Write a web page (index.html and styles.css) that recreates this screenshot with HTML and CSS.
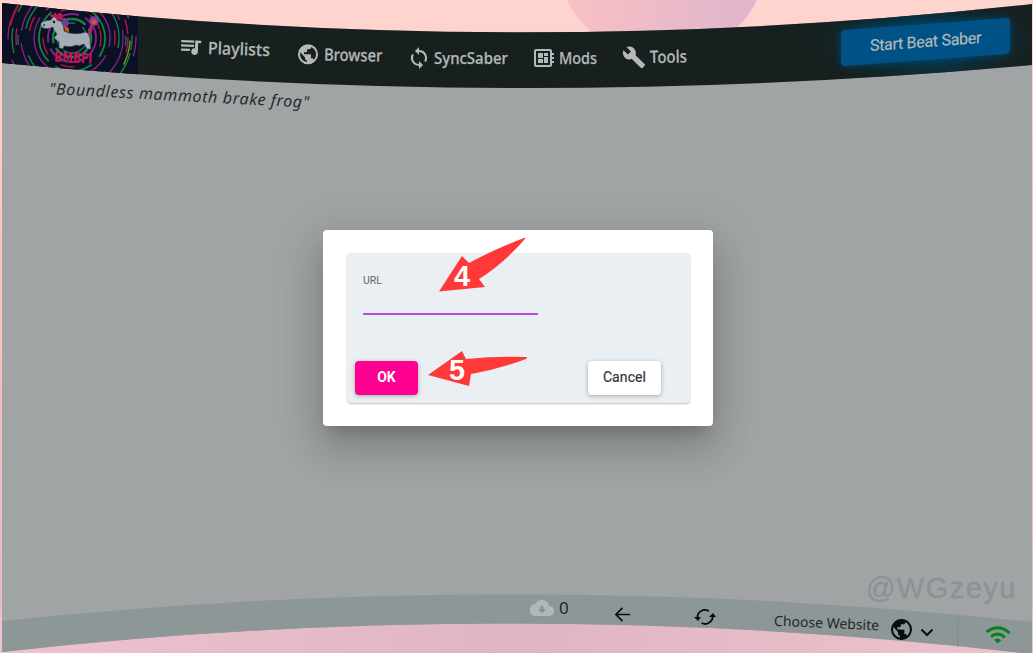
FILE: index.html
```html
<!DOCTYPE html>
<html lang="en">
<head>
<meta charset="utf-8">
<title>BMBF</title>
<link rel="stylesheet" href="styles.css">
</head>
<body>
<div class="scene">
  <svg class="backdrop" viewBox="0 0 1033 653" aria-hidden="true">
    <defs>
      <linearGradient id="sky" x1="0" y1="0" x2="0" y2="1"><stop offset="0" stop-color="#ffd5d0"/><stop offset=".4" stop-color="#f8c4bd"/><stop offset="1" stop-color="#e2b9c5"/></linearGradient>
      <linearGradient id="planet"><stop offset="0" stop-color="#f9c1c2"/><stop offset="1" stop-color="#dfb4ce"/></linearGradient>
      <radialGradient id="glow"><stop offset=".35" stop-color="#003c56"/><stop offset="1" stop-color="#17201f" stop-opacity="0"/></radialGradient>
      <linearGradient id="floor" x1="0" x2="1"><stop offset="0" stop-color="#edc2ce"/><stop offset=".5" stop-color="#deb6c1"/><stop offset="1" stop-color="#edc2cd"/></linearGradient>
      <clipPath id="bar"><path d="M2 3Q517 61 1032 4V65Q517 112 2 63Z"/></clipPath>
    </defs>
    <rect width="1033" height="653" fill="url(#sky)"/>
    <circle cx="662" cy="-47" r="106" fill="url(#planet)"/>
    <rect y="610" width="1033" height="43" fill="url(#floor)"/>
    <path d="M2 3Q517 61 1032 4V654Q517 594 2 652Z" fill="#a1a4a5"/>
    <path d="M2 621Q517 567 1032 622V654Q517 594 2 652Z" fill="#8e9798"/>
    <path d="M2 3Q517 61 1032 4V65Q517 112 2 63Z" fill="#17201f"/>
    <g clip-path="url(#bar)">
      <ellipse cx="926" cy="42" rx="125" ry="50" fill="url(#glow)"/>
      <path d="M2 0H138V80H2Z" fill="#0b1024"/>
      <g fill="none" stroke-width="1.400" stroke-linecap="round">
        <g stroke="#138344"><circle cx="72" cy="38" r="19" stroke-width="2.400" stroke-dasharray="48 7"/><circle cx="72" cy="38" r="33" stroke-width="1.800" stroke-dasharray="54 12 37 10" transform="rotate(-60 72 38)"/><circle cx="72" cy="38" r="47" stroke-dasharray="42 28 29 21" transform="rotate(-40 72 38)"/><circle cx="72" cy="38" r="60" stroke-dasharray="24 18 14 23" transform="rotate(15 72 38)"/></g>
        <g stroke="#7b267e"><circle cx="72" cy="38" r="24" stroke-width="2" stroke-dasharray="47 8" transform="rotate(40 72 38)"/><circle cx="72" cy="38" r="38" stroke-dasharray="48 10 32 16" transform="rotate(140 72 38)"/><circle cx="72" cy="38" r="51" stroke-dasharray="32 12 44 13" transform="rotate(75 72 38)"/><circle cx="72" cy="38" r="64" stroke-dasharray="18 22"/></g>
        <g stroke="#ae1744"><circle cx="72" cy="38" r="29" stroke-dasharray="16 35 13 18" transform="rotate(-15 72 38)"/><circle cx="72" cy="38" r="43" stroke-dasharray="14 46" transform="rotate(110 72 38)"/><circle cx="72" cy="38" r="63" stroke-width="2" stroke-dasharray="24 374" transform="rotate(192 72 38)"/><circle cx="72" cy="38" r="56" stroke-dasharray="14 44 16 37"/></g>
        <g stroke="#176c72"><circle cx="72" cy="38" r="15" stroke-dasharray="32 9"/><circle cx="72" cy="38" r="54" stroke-dasharray="9 49" transform="rotate(50 72 38)"/></g>
        <circle cx="72" cy="38" r="58" stroke="#888b20" stroke-dasharray="22 340" transform="rotate(5 72 38)"/>
      </g>
      <path d="M85 36Q92 34 91 25" fill="none" stroke="#bf1d72" stroke-width="3"/>
      <circle cx="94" cy="21" r="4.800" fill="#8537a1"/><circle cx="94" cy="22" r="2.600" fill="#c05a38"/>
      <path d="M42 22Q47 20 51 20L55 13 57 20Q64 21 64 31Q74 36 86 32Q91 35 90 43L91 49 87 49 84 44Q81 45 79 46L77 45Q70 48 64 46L63 49 59 48 59 42 54 38 57 34Q53 30 53 27Q48 30 43 28Q39 25 42 22Z" fill="#a2adb5" stroke="#343b4c" stroke-width=".6"/>
      <circle cx="54" cy="22" r="1.200" fill="#111624"/><circle cx="44" cy="25" r="1" fill="#343b4c"/>
      <path d="M51 17Q48 13 54 15L55 12 57 15Q59 11 62 14Q64 19 60 21Q56 17 51 17Z" fill="#bd174d"/>
      <path d="M62 18Q68 17 69 23Q67 29 63 25Z" fill="#7837a0"/><path d="M64 26Q70 26 69 32L65 31Z" fill="#c05d26"/>
      <text x="54" y="61.500" class="logo-text" textLength="38" lengthAdjust="spacingAndGlyphs" transform="rotate(3 54 62)">BMBFI</text>
    </g>
    <path d="M958 619V647" stroke="#818b8c"/>
    <path d="M656 599V625M772 605V630" stroke="#899293"/>
  </svg>

  <header class="topbar">
    <nav class="nav">
      <a class="item playlists"><svg viewBox="0 0 24 24"><path d="M2 5h13v2.200H2zm0 4.200h13v2.200H2zm0 4.200h9v2.200H2zM16 5h6v2.500h-3V16a3.300 3.300 0 1 1-3-3.200z"/></svg><span>Playlists</span></a>
      <a class="item browser"><svg viewBox="0 0 24 24"><path d="M12 2a10 10 0 1 0 0 20 10 10 0 0 0 0-20zm-1 17.900A8 8 0 0 1 4.200 10.200L9 15v1a2 2 0 0 0 2 2zm6.900-2.500A2 2 0 0 0 16 16h-1v-3a1 1 0 0 0-1-1H8v-2h2a1 1 0 0 0 1-1V7h2a2 2 0 0 0 2-2v-.4a8 8 0 0 1 2.900 12.800z"/></svg><span>Browser</span></a>
      <a class="item sync"><svg viewBox="0 0 24 24"><path d="M12 4V1L8 5l4 4V6a6 6 0 0 1 5.300 8.800l1.500 1.500A8 8 0 0 0 12 4zm0 14a6 6 0 0 1-5.300-8.800L5.200 7.700A8 8 0 0 0 12 20v3l4-4-4-4z"/></svg><span>SyncSaber</span></a>
      <a class="item mods"><svg viewBox="0 0 24 24"><path d="M22 9V7h-2V5a2 2 0 0 0-2-2H4a2 2 0 0 0-2 2v14c0 1.100.9 2 2 2h14a2 2 0 0 0 2-2v-2h2v-2h-2v-2h2v-2h-2V9zm-4 10H4V5h14zM6 13h5v4H6zm6-6h4v3h-4zM6 7h5v5H6zm6 4h4v6h-4z"/></svg><span>Mods</span></a>
      <a class="item tools"><svg viewBox="0 0 24 24"><path d="M22.700 19l-9.100-9.100c.9-2.300.4-5-1.500-6.900-2-2-5-2.400-7.400-1.300L9 6 6 9 1.600 4.700C.4 7.100.9 10.100 2.900 12.100c1.900 1.900 4.600 2.400 6.900 1.500l9.100 9.100c.4.4 1 .4 1.400 0l2.300-2.300c.5-.4.5-1.100.1-1.400z"/></svg><span>Tools</span></a>
    </nav>
    <button class="start">Start Beat Saber</button>
  </header>

  <main class="content">
    <p class="quote">"Boundless mammoth brake frog"</p>
    <section class="dialog">
      <div class="card">
        <label class="field"><span>URL</span><input class="url" type="text" aria-label="URL"></label>
        <div class="actions"><button class="ok">OK</button><button class="cancel">Cancel</button></div>
      </div>
      <svg class="markers" viewBox="0 0 390 197">
        <path d="M116 61.500L139 26 146 33Q172 19 201 8Q203 7 202 9Q180 34 156 49L162 57Z"/>
        <path d="M105 145L139 121 143 129Q174 126 202 127Q206 127 203 129Q176 139 148 144L146 156Z"/>
        <text x="131" y="55.500" textLength="16" lengthAdjust="spacingAndGlyphs">4</text><text x="126" y="150" textLength="16" lengthAdjust="spacingAndGlyphs">5</text>
      </svg>
    </section>
    <p class="watermark">@WGzeyu</p>
  </main>

  <footer class="bottombar">
    <div class="downloads"><svg viewBox="0 0 24 18"><path d="M19.300 7A7.500 7.500 0 0 0 5.300 5 6 6 0 0 0 6 17h13a5 5 0 0 0 .3-10z" fill="#b2b7b7"/><path d="M10.500 7h3v3H16l-4 4.500L8 10h2.500z" fill="#899191"/></svg><span>0</span></div>
    <svg class="back" viewBox="0 0 18 18"><path d="M17 9H2M9 2L2 9l7 7" fill="none" stroke="#080d0e" stroke-width="1.800"/></svg>
    <svg class="reload" viewBox="0 0 22 18"><path d="M3.500 10Q3 5 8 2.500 11 1 15 3M18.500 7q1 5-4 8-3 2-7 0" fill="none" stroke="#080d0e" stroke-width="1.800"/><path d="M0 9h7l-3 4zM15 9l4-4 3 4z" fill="#080d0e"/></svg>
    <span class="choose">Choose Website</span>
    <svg class="globe" viewBox="2 2 20 20"><path d="M12 2a10 10 0 1 0 0 20 10 10 0 0 0 0-20zm-1 17.900A8 8 0 0 1 4.200 10.200L9 15v1a2 2 0 0 0 2 2zm6.900-2.500A2 2 0 0 0 16 16h-1v-3a1 1 0 0 0-1-1H8v-2h2a1 1 0 0 0 1-1V7h2a2 2 0 0 0 2-2v-.4a8 8 0 0 1 2.900 12.800z"/></svg>
    <svg class="chevron" viewBox="0 0 14 9"><path d="M1.500 1.500L7 7l5.500-5.500" fill="none" stroke="#080d0e" stroke-width="2"/></svg>
    <svg class="wifi" viewBox="0 0 26 18"><g fill="none" stroke="#087f19" stroke-width="2.800"><path d="M1.500 6.500Q13-3 24.500 6.500M6 11Q13 5 20 11"/></g><path d="M9.500 14Q13 11 16.500 14L13 17.500z" fill="#087f19"/></svg>
  </footer>
</div>
</body>
</html>
```
FILE: styles.css
```css
* { box-sizing: border-box; }
body { margin: 0; overflow: hidden; font-family: "Noto Sans", sans-serif; }
p { margin: 0; }
button { border: 0; padding: 0; }
.scene { position: relative; width: 1033px; height: 653px; display: flex; flex-direction: column; }
.backdrop { position: absolute; inset: 0; width: 1033px; height: 653px; }
.logo-text { font: bold 14px "DejaVu Sans", sans-serif; fill: #c51355; }
.topbar, .content, .bottombar { position: relative; }
.topbar { height: 88px; display: flex; justify-content: space-between; align-items: flex-start; padding: 0 23px 0 179px; }
.nav { display: grid; grid-template-columns: 117px 111px 125px 90px 70px; align-items: start; color: #b3b8b8; font-size: 17px; font-weight: 500; }
.item { display: flex; align-items: center; gap: 4px; height: 24px; white-space: nowrap; }
.item svg { width: 24px; height: 24px; flex: none; fill: #b3b8b8; }
.item span { transform-origin: left; transform: scaleX(.91); margin-top: -2px; -webkit-text-stroke: .25px #b3b8b8; }
.playlists { margin-top: 37px; transform: rotate(2deg); }
.playlists span { transform: translateX(1px) scaleX(.94); }
.browser { margin-top: 43px; transform: rotate(1deg); }
.browser span { transform: scaleX(.87); }
.sync { margin-top: 46px; }
.sync svg { margin-right: -1px; }
.sync span { transform: scaleX(.88); }
.mods { margin-top: 46px; }
.mods svg { margin-right: -1px; }
.mods span { transform: scaleX(.85); }
.tools { margin-top: 45px; transform: rotate(-1deg); }
.tools span { transform: scaleX(.88); }
.start { width: 169px; height: 36px; margin-top: 24px; border-radius: 4px; background: #005286; color: #b1b8b8; font: 400 16px Roboto, sans-serif; letter-spacing: -.3px; padding-bottom: 2px; transform: skewY(-4.200deg); box-shadow: 0 0 7px #00466a; -webkit-text-stroke: .2px #b1b8b8; }
.content { height: 506px; display: flex; flex-direction: column; }
.quote { align-self: flex-start; margin: -4px 0 0 49px; font-size: 16px; font-style: italic; line-height: 22px; color: #242b2c; white-space: nowrap; transform: rotate(3deg); letter-spacing: .65px; }
.dialog { position: relative; width: 390px; height: 196px; margin: 124px 0 0 323px; padding: 23px 23px 22px 24px; background: #fff; border-radius: 4px; box-shadow: 0 11px 15px -7px rgba(0,0,0,.2), 0 24px 38px 3px rgba(0,0,0,.12), 0 9px 46px 8px rgba(0,0,0,.1); }
.card { height: 150px; display: flex; flex-direction: column; justify-content: space-between; padding: 20px 29px 8px 8px; background: #e9eff2; border-radius: 4px; box-shadow: 0 1px 2px rgba(0,0,0,.25); }
.field { display: flex; flex-direction: column; margin-left: 8px; width: 175px; font: 10.500px/15px Roboto, sans-serif; color: #66696e; }
.url { width: 175px; height: 27px; padding: 0; background: none; border: 0; border-bottom: 2px solid #b94be5; outline: 0; font: 15px Roboto, sans-serif; }
.actions { display: flex; justify-content: space-between; }
.actions button { height: 34px; border-radius: 4px; font: 500 14px Roboto, sans-serif; box-shadow: 0 1px 4px rgba(0,0,0,.3); padding-bottom: 2px; }
.actions .ok { width: 63px; background: #ff0090; color: #fff; font-weight: 700; }
.actions .cancel { width: 73px; background: #fff; color: #35363a; font-weight: 400; -webkit-text-stroke: .2px #35363a; letter-spacing: .1px; }
.markers { position: absolute; inset: 0; width: 390px; height: 197px; fill: #ff3838; }
.markers text { fill: #fff; font: bold 30px "Liberation Sans", sans-serif; }
.watermark { align-self: flex-end; margin: auto 16px -12px 0; font: 29px/36px "Liberation Sans", sans-serif; letter-spacing: 1.500px; color: #8e9295; -webkit-text-stroke: .4px #8e9295; }
.bottombar { height: 59px; display: flex; align-items: flex-start; padding-left: 530px; color: #20282a; }
.downloads { display: flex; align-items: center; gap: 5px; width: 84px; height: 24px; margin-top: 2px; font-size: 17px; }
.downloads svg { width: 24px; height: 18px; }
.downloads span { margin-top: -2px; }
.back { width: 17px; height: 17px; margin-top: 12px; }
.reload { width: 22px; height: 18px; margin: 14px 0 0 63px; }
.choose { width: 104px; margin: 18px 0 0 58px; font-size: 14px; line-height: 22px; white-space: nowrap; transform: rotate(2.600deg); }
.globe { width: 21px; height: 21px; margin: 25px 0 0 13px; fill: #080d0e; transform: rotate(5deg); }
.chevron { width: 14px; height: 9px; margin: 34px 0 0 8px; }
.wifi { width: 26px; height: 18px; margin: 32px 0 0 51px; transform: rotate(3deg); }
```
